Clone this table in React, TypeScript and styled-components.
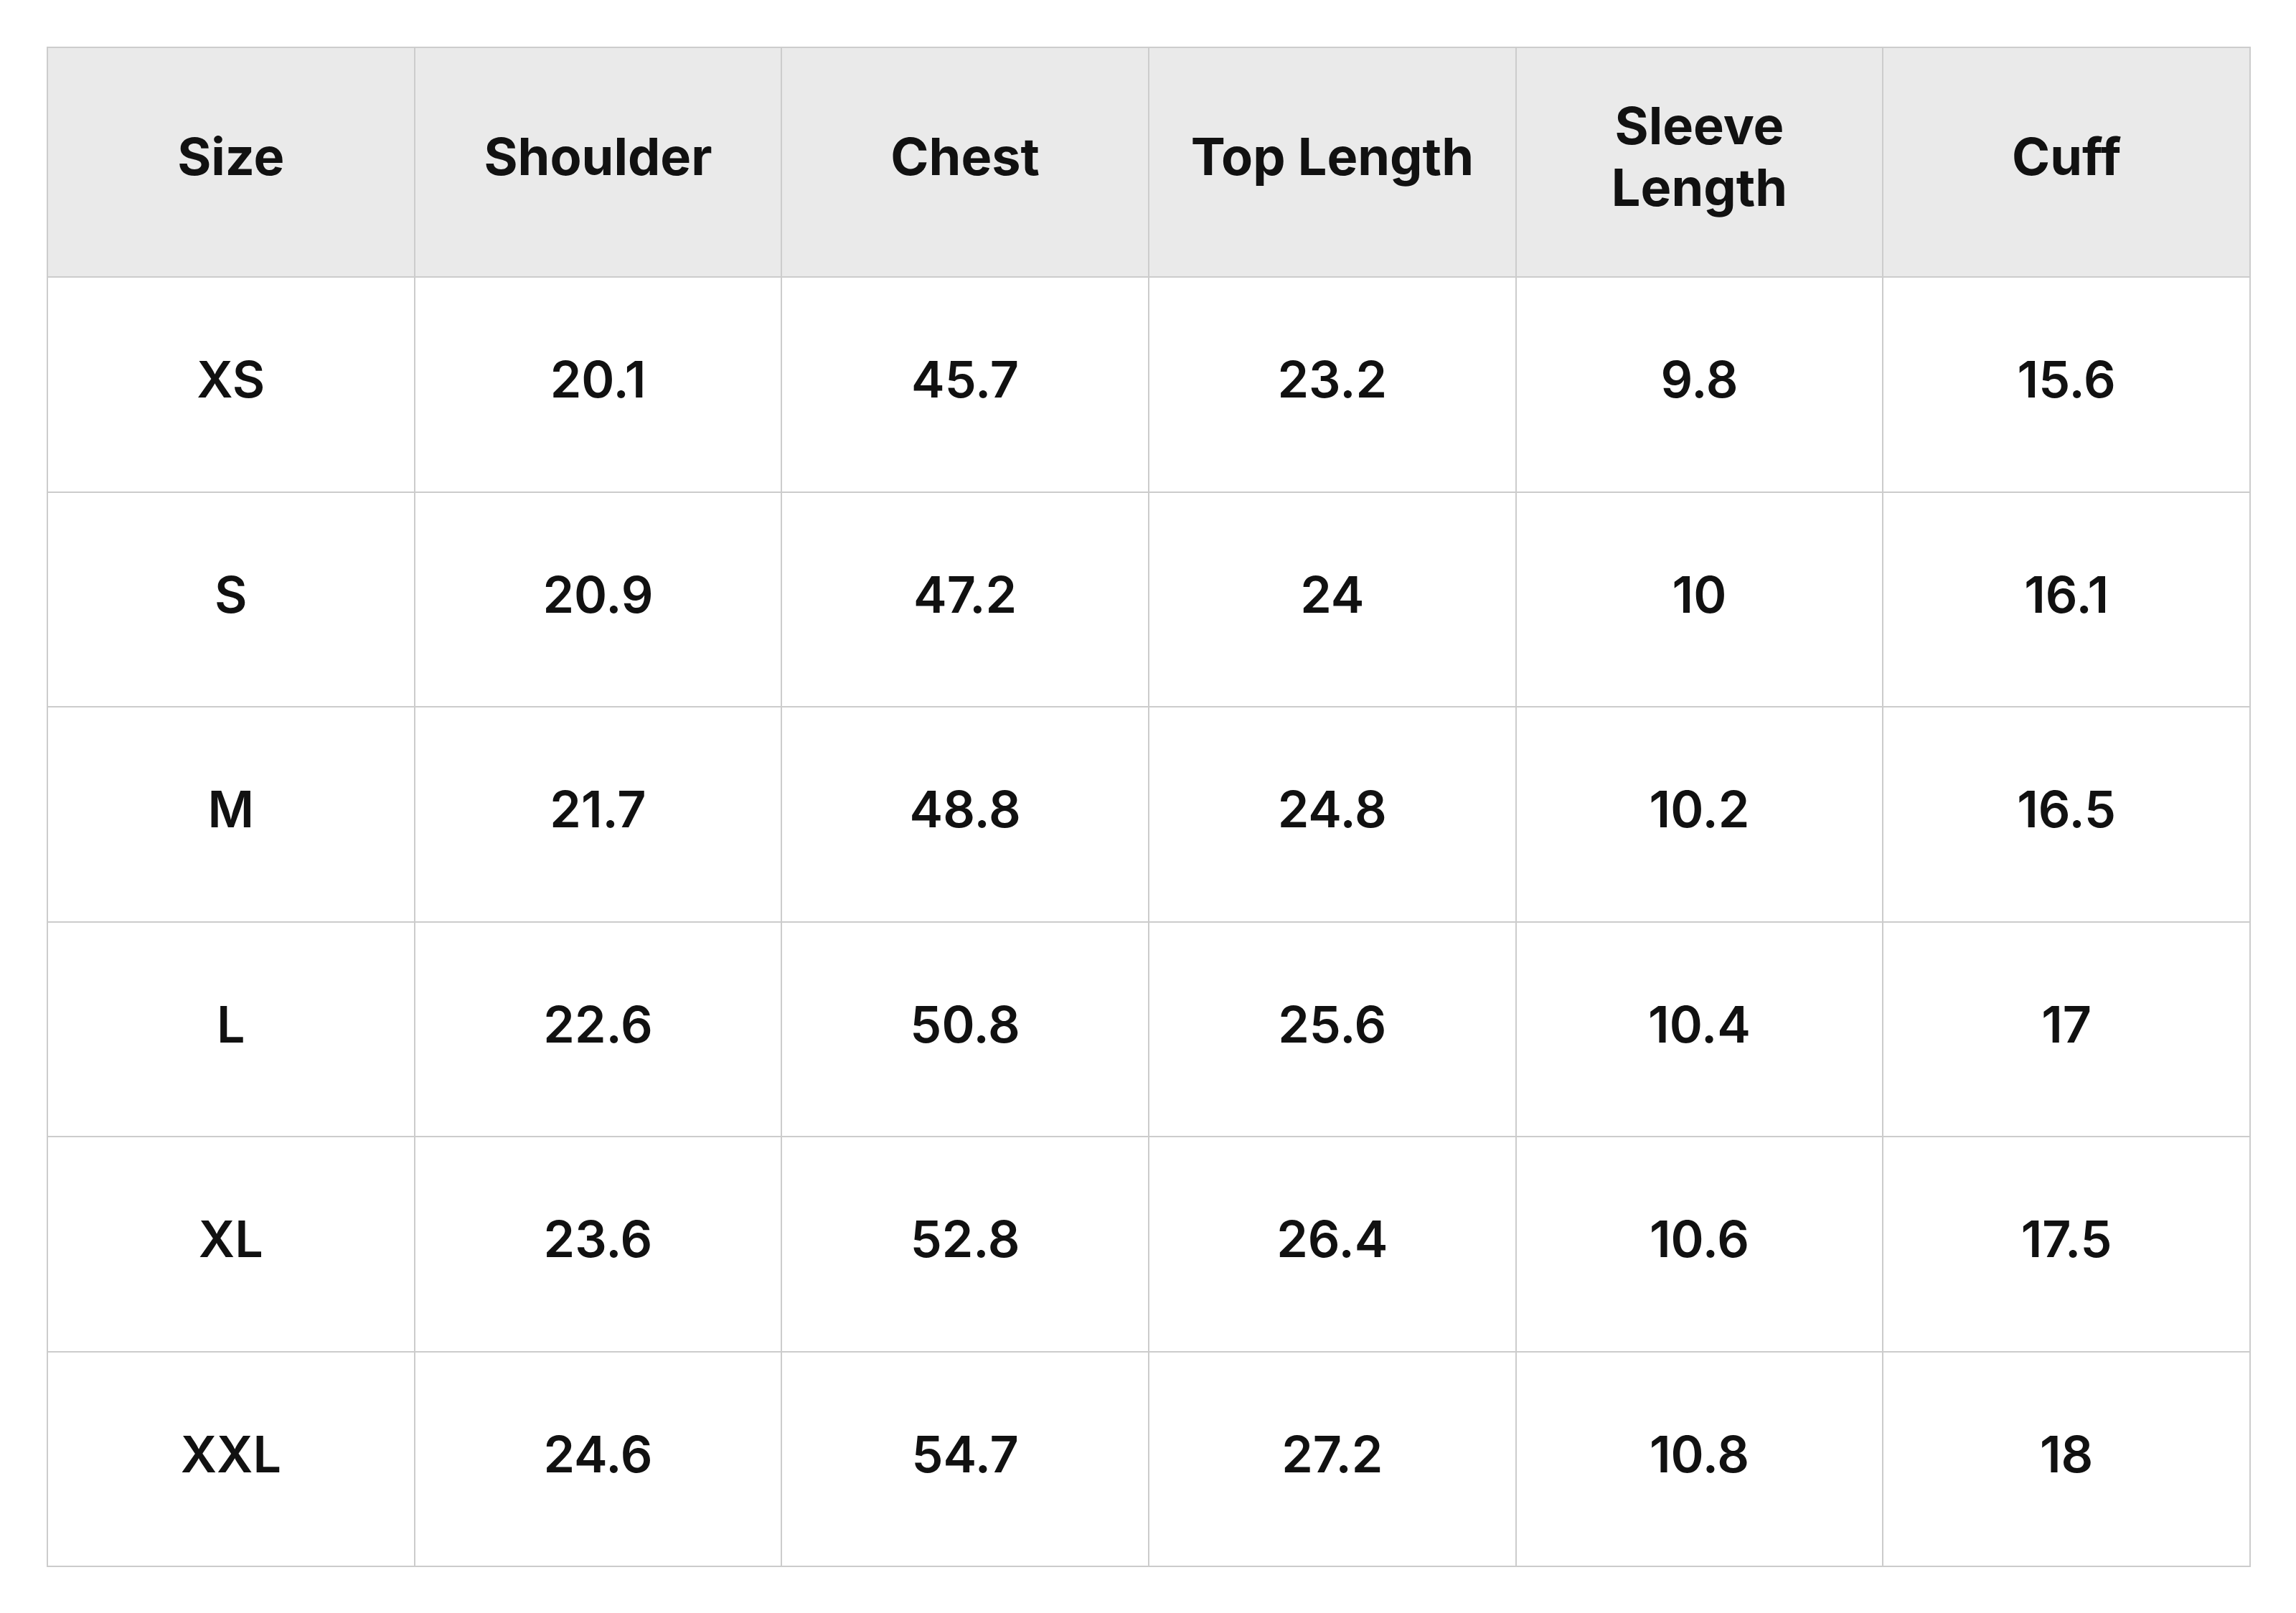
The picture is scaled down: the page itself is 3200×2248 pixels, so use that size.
import * as React from 'react';
import styled, { createGlobalStyle } from 'styled-components';

const GlobalStyle = createGlobalStyle`
  html, body {
    margin: 0;
    padding: 0;
    background: #ffffff;
  }
  body {
    font-family: Inter, 'Noto Sans', 'Liberation Sans', sans-serif;
    color: #111111;
  }
`;

const Page = styled.div`
  padding: 65px 63px 59px 65px;
`;

const Table = styled.table`
  width: 3072px;
  border-collapse: collapse;
  table-layout: fixed;
`;

const HeadCell = styled.th`
  height: 302px;
  padding: 0 36px 16px;
  background: #eaeaea;
  border: 2px solid #cccccc;
  font-size: 72px;
  font-weight: 700;
  line-height: 86px;
  text-align: center;
  vertical-align: middle;
`;

const Cell = styled.td`
  height: 283.5px;
  padding: 0 0 14px;
  border: 2px solid #cccccc;
  font-size: 70px;
  font-weight: 600;
  text-align: center;
  vertical-align: middle;
`;

const columns = ['Size', 'Shoulder', 'Chest', 'Top Length', 'Sleeve Length', 'Cuff'];

const rows = [
  ['XS', '20.1', '45.7', '23.2', '9.8', '15.6'],
  ['S', '20.9', '47.2', '24', '10', '16.1'],
  ['M', '21.7', '48.8', '24.8', '10.2', '16.5'],
  ['L', '22.6', '50.8', '25.6', '10.4', '17'],
  ['XL', '23.6', '52.8', '26.4', '10.6', '17.5'],
  ['XXL', '24.6', '54.7', '27.2', '10.8', '18'],
];

export default function App() {
  return (
    <Page>
      <GlobalStyle />
      <Table>
        <thead>
          <tr>
            {columns.map((col) => (
              <HeadCell key={col}>{col}</HeadCell>
            ))}
          </tr>
        </thead>
        <tbody>
          {rows.map((row) => (
            <tr key={row[0]}>
              {row.map((value, i) => (
                <Cell key={i}>{value}</Cell>
              ))}
            </tr>
          ))}
        </tbody>
      </Table>
    </Page>
  );
}
